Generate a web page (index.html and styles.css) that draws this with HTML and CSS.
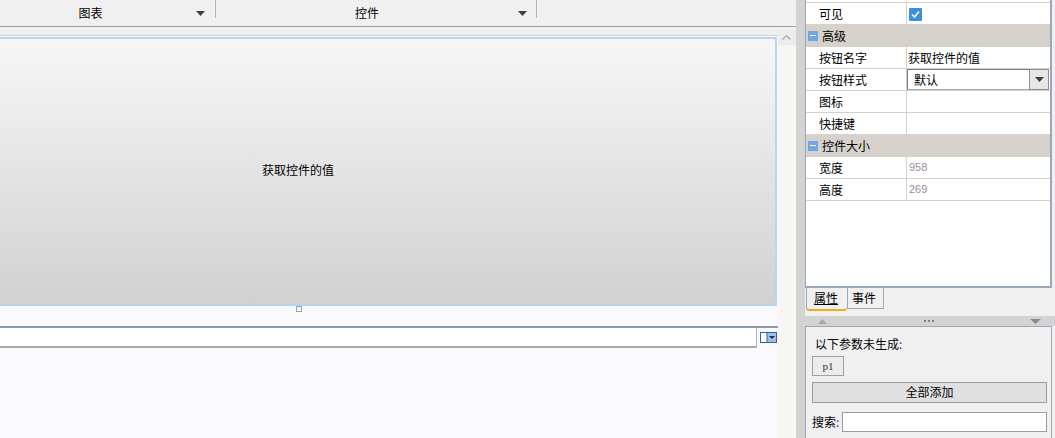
FILE: index.html
```html
<!DOCTYPE html>
<html lang="zh">
<head>
<meta charset="utf-8">
<title>控件设计</title>
<link rel="stylesheet" href="styles.css">
</head>
<body>
<div class="app">
  <div class="main">
    <div class="toolbar">
      <div class="tab tab-first"><span class="tab-label">图表</span><svg class="caret" width="9" height="5" viewBox="0 0 9 5"><polygon points="0,0 9,0 4.5,5" fill="#404040"/></svg></div>
      <div class="sep"></div>
      <div class="tab tab-second"><span class="tab-label">控件</span><svg class="caret" width="9" height="5" viewBox="0 0 9 5"><polygon points="0,0 9,0 4.5,5" fill="#404040"/></svg></div>
      <div class="sep"></div>
    </div>
    <div class="work">
      <div class="canvas">
        <div class="design">
          <div class="btnbox">获取控件的值</div>
          <div class="handle-row"><span class="handle"></span></div>
          <div class="inputbar">
            <div class="inputfield"></div>
            <svg class="ddbtn" width="17" height="11" viewBox="0 0 17 11"><rect x="0.5" y="0.5" width="16" height="10" fill="#ffffff" stroke="#3a5f98"/><rect x="7" y="1" width="9" height="9" fill="#9cc0ec"/><line x1="7" y1="1" x2="7" y2="10" stroke="#3a5f98"/><polygon points="9,4 15,4 12,7" fill="#1c3060"/></svg>
          </div>
          <div class="filler"></div>
        </div>
      </div>
      <div class="vscroll">
        <div class="vscroll-up"><svg width="9" height="5" viewBox="0 0 9 5"><polyline points="0.5,4.5 4.5,0.8 8.5,4.5" fill="none" stroke="#b4b4b4" stroke-width="1.6"/></svg></div>
      </div>
    </div>
  </div>
  <div class="splitter"></div>
  <div class="side">
    <div class="grid">
      <div class="spacer"></div>
      <div class="row"><div class="key">可见</div><div class="val"><svg class="check" width="13" height="13" viewBox="0 0 13 13"><rect width="13" height="13" rx="1" fill="#3a8ee4"/><polyline points="3,6.5 5.5,9 10,3.5" fill="none" stroke="#ffffff" stroke-width="1.6"/></svg></div></div>
      <div class="group"><span class="minus"></span>高级</div>
      <div class="row"><div class="key">按钮名字</div><div class="val">获取控件的值</div></div>
      <div class="row"><div class="key">按钮样式</div><div class="val"><div class="select"><span class="select-text">默认</span><span class="select-btn"><svg width="9" height="5" viewBox="0 0 9 5"><polygon points="0,0 9,0 4.5,5" fill="#404040"/></svg></span></div></div></div>
      <div class="row"><div class="key">图标</div><div class="val"></div></div>
      <div class="row"><div class="key">快捷键</div><div class="val"></div></div>
      <div class="group"><span class="minus"></span>控件大小</div>
      <div class="row"><div class="key">宽度</div><div class="val num">958</div></div>
      <div class="row"><div class="key">高度</div><div class="val num">269</div></div>
    </div>
    <div class="tabs">
      <div class="ptab active"><span>属性</span></div>
      <div class="ptab">事件</div>
    </div>
    <div class="hsplit">
      <svg width="9" height="5" viewBox="0 0 9 5"><polygon points="0,5 9,5 4.5,0" fill="#a8a8a8"/></svg>
      <span class="dots"><i></i><i></i><i></i></span>
      <svg width="11" height="5" viewBox="0 0 11 5"><polygon points="0,0 11,0 5.5,5" fill="#8c8c8c"/></svg>
    </div>
    <div class="params">
      <div class="params-title">以下参数未生成<span class="colon">:</span></div>
      <div class="pbtn">p1</div>
      <div class="addall">全部添加</div>
      <div class="search"><span class="search-label">搜索<span class="colon">:</span></span><div class="search-input"></div></div>
    </div>
  </div>
</div>
</body>
</html>
```

FILE: styles.css
```css
* { box-sizing: border-box; }
html, body { margin: 0; padding: 0; }
body {
  width: 1055px;
  height: 438px;
  overflow: hidden;
  font-family: "Noto Sans CJK SC", "DejaVu Sans", sans-serif;
  font-size: 12px;
  color: #000;
  background: #f0f0f0;
}
.app { display: flex; height: 438px; }

/* main column */
.main { width: 796px; display: flex; flex-direction: column; }
.toolbar {
  height: 27px;
  display: flex;
  align-items: flex-start;
  background: #f0f0f0;
  border-bottom: 1px solid #a0a0a0;
}
.tab { height: 26px; display: flex; align-items: center; }
.tab-first { width: 230px; margin-left: -15px; }
.tab-second { width: 320px; }
.tab-label { flex: 1; text-align: center; line-height: 14px; }
.tab-first .caret { margin-right: 10px; }
.tab-second .caret { margin-right: 9px; }
.sep { width: 1px; height: 18px; background: #bdb5a4; }

.work { flex: 1; display: flex; background: #f0f0f0; }
.canvas { width: 778px; padding-top: 8px; display: flex; flex-direction: column; }
.design {
  flex: 1;
  display: flex;
  flex-direction: column;
  background: #fafafc;
  border-top: 1px solid #d2d2d2;
  padding-top: 1px;
  overflow: hidden;
}
.btnbox {
  width: 958px;
  height: 269px;
  margin-left: -181px;
  flex: none;
  border: 2px solid #b9d4ee;
  background: linear-gradient(#f7f7f7, #d1d1d1);
  display: flex;
  align-items: center;
  justify-content: center;
  line-height: 14px;
  padding-bottom: 3px;
}
.handle-row { height: 20px; position: relative; flex: none; }
.handle {
  position: absolute;
  left: 296px;
  top: 0;
  width: 6px;
  height: 6px;
  border: 1px solid #8ea2c2;
  background: #fff;
}
.inputbar {
  height: 22px;
  flex: none;
  display: flex;
  align-items: center;
  border-top: 2px solid #8c9ab2;
}
.inputfield {
  width: 757px;
  height: 20px;
  align-self: flex-start;
  background: #fff;
  border-bottom: 2px solid #a9a9a9;
  border-right: 1px solid #b8b8b8;
}
.ddbtn { margin-left: 3px; margin-top: -2px; }
.filler { flex: 1; }

.vscroll { width: 18px; margin-top: 3px; background: #f7f6f2; }
.vscroll-up {
  height: 15px;
  background: #ececea;
  display: flex;
  align-items: center;
  justify-content: center;
  padding-right: 2px;
}

.splitter { width: 9px; background: #d3d3d3; }

/* side panel */
.side { width: 250px; display: flex; flex-direction: column; background: #f0f0f0; }
.grid {
  height: 288px;
  margin-right: 3px;
  background: #fff;
  border-left: 1px solid #9aa6bc;
  border-right: 2px solid #9aa6bc;
  border-bottom: 2px solid #9aa6bc;
}
.spacer { height: 3px; border-bottom: 1px solid #d6d2ca; }
.row { height: 22px; display: flex; border-bottom: 1px solid #d6d2ca; }
.key {
  width: 101px;
  padding-left: 13px;
  border-right: 1px solid #d6d2ca;
  line-height: 21px;
}
.val { flex: 1; padding-left: 1px; line-height: 21px; display: flex; align-items: center; }
.check { margin-left: 1px; margin-top: 1px; }
.num { font-family: "Liberation Sans", Arial, sans-serif; font-size: 11px; color: #9c8c9c; padding-left: 2px; }
.group {
  height: 22px;
  background: #d6d2cb;
  display: flex;
  align-items: center;
  padding-left: 2px;
  line-height: 14px;
}
.minus {
  width: 10px;
  height: 10px;
  background: #6fa7e0;
  margin-right: 4px;
  position: relative;
}
.minus::after {
  content: "";
  position: absolute;
  left: 2px;
  top: 4px;
  width: 6px;
  height: 1px;
  background: #fff;
}
.select {
  width: 142px;
  height: 21px;
  margin-left: -1px;
  display: flex;
  border: 1px solid #7c7c7c;
  border-bottom-color: #a8a8a8;
  background: #fff;
}
.select-text { flex: 1; padding-left: 6px; line-height: 19px; }
.select-btn {
  width: 20px;
  margin: -1px -1px -1px 0;
  border: 1px solid #8c8c8c;
  background: #e6e6e6;
  display: flex;
  align-items: center;
  justify-content: center;
}

.tabs { height: 28px; display: flex; padding-left: 1px; align-items: flex-start; }
.ptab {
  height: 21px;
  padding: 0 6px;
  border-left: 1px solid #9aa6bc;
  border-right: 1px solid #9aa6bc;
  border-bottom: 1px solid #9aa6bc;
  line-height: 19px;
}
.ptab.active {
  width: 41px;
  height: 23px;
  padding: 0 7px;
  border-bottom: 2px solid #efae1c;
  border-radius: 0 0 3px 3px;
  border-right: none;
}
.ptab.active span { text-decoration: underline; }
.ptab:not(.active) { width: 37px; padding: 0 4px; border-left: 1px solid #9aa6bc; }

.hsplit {
  height: 10px;
  background: #d3d3d3;
  display: flex;
  align-items: center;
  justify-content: space-between;
  padding: 0 14px 0 13px;
}
.dots { display: flex; gap: 2px; }
.dots i { width: 2px; height: 2px; background: #808080; display: block; }

.params {
  flex: 1;
  margin-right: 3px;
  border: 1px solid #9aa6bc;
  border-bottom: none;
  background: #f0f0f0;
  padding: 10px 5px 0 6px;
  display: flex;
  flex-direction: column;
  align-items: flex-start;
}
.params-title { margin-left: 3px; line-height: 14px; }
.colon { color: #7a1a7a; }
.pbtn {
  width: 32px;
  height: 20px;
  margin-top: 5px;
  border: 1px solid #a0a0a0;
  background: #ececec;
  font-family: "Liberation Serif", serif;
  font-size: 11px;
  color: #303050;
  text-align: center;
  line-height: 18px;
}
.addall {
  width: 235px;
  height: 21px;
  margin-top: 6px;
  border: 1px solid #9c9c9c;
  background: #e0e0e0;
  text-align: center;
  line-height: 18px;
}
.search { margin-top: 9px; display: flex; align-items: center; width: 235px; }
.search-label { width: 30px; line-height: 14px; }
.search-input { flex: 1; height: 20px; border: 1px solid #9c9c9c; background: #fff; }
```
